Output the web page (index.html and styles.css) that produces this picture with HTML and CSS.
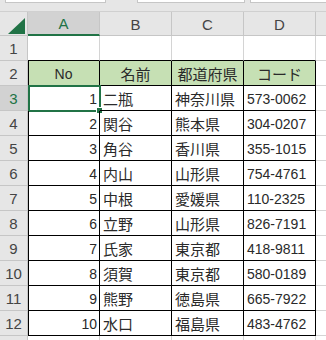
FILE: index.html
```html
<!DOCTYPE html>
<html lang="ja">
<head>
<meta charset="utf-8">
<link rel="stylesheet" href="styles.css">
</head>
<body>
<div class="top">
  <div class="box b1"></div>
  <div class="box b2"></div>
  <div class="box b3"></div>
</div>
<div class="sheet">
  <div class="corner"><svg width="28" height="24" viewBox="0 0 28 24"><polygon points="8,22 25,22 25,6" fill="#217346"/></svg></div>
  <div class="ch sel">A</div><div class="ch">B</div><div class="ch">C</div><div class="ch">D</div><div class="ch e"></div>

  <div class="rh">1</div><div class="c tb"></div><div class="c tb"></div><div class="c tb"></div><div class="c tb"></div><div class="c e"></div>

  <div class="rh">2</div><div class="c t hd a">No</div><div class="c t hd jp">名前</div><div class="c t hd jp">都道府県</div><div class="c t hd jp">コード</div><div class="c e"></div>

  <div class="rh rsel">3</div><div class="c t a num cur">1<span class="selbox"><span class="handle"></span></span></div><div class="c t jp">二瓶</div><div class="c t jp">神奈川県</div><div class="c t">573-0062</div><div class="c e"></div>
  <div class="rh">4</div><div class="c t a num">2</div><div class="c t jp">関谷</div><div class="c t jp">熊本県</div><div class="c t">304-0207</div><div class="c e"></div>
  <div class="rh">5</div><div class="c t a num">3</div><div class="c t jp">角谷</div><div class="c t jp">香川県</div><div class="c t">355-1015</div><div class="c e"></div>
  <div class="rh">6</div><div class="c t a num">4</div><div class="c t jp">内山</div><div class="c t jp">山形県</div><div class="c t">754-4761</div><div class="c e"></div>
  <div class="rh">7</div><div class="c t a num">5</div><div class="c t jp">中根</div><div class="c t jp">愛媛県</div><div class="c t">110-2325</div><div class="c e"></div>
  <div class="rh">8</div><div class="c t a num">6</div><div class="c t jp">立野</div><div class="c t jp">山形県</div><div class="c t">826-7191</div><div class="c e"></div>
  <div class="rh">9</div><div class="c t a num">7</div><div class="c t jp">氏家</div><div class="c t jp">東京都</div><div class="c t">418-9811</div><div class="c e"></div>
  <div class="rh">10</div><div class="c t a num">8</div><div class="c t jp">須賀</div><div class="c t jp">東京都</div><div class="c t">580-0189</div><div class="c e"></div>
  <div class="rh">11</div><div class="c t a num">9</div><div class="c t jp">熊野</div><div class="c t jp">徳島県</div><div class="c t">665-7922</div><div class="c e"></div>
  <div class="rh">12</div><div class="c t a num">10</div><div class="c t jp">水口</div><div class="c t jp">福島県</div><div class="c t">483-4762</div><div class="c e"></div>

  <div class="rh"></div><div class="c"></div><div class="c"></div><div class="c"></div><div class="c"></div><div class="c e"></div>
</div>
</body>
</html>
```
FILE: styles.css
```css
html, body {
  margin: 0;
  padding: 0;
  background: #ffffff;
  overflow: hidden;
}
body {
  width: 326px;
  height: 340px;
  font-family: "Liberation Sans", "Noto Sans CJK JP", sans-serif;
  color: #2a2a2a;
}
.top {
  height: 12px;
  background: #e6e6e6;
  position: relative;
  display: flex;
  box-sizing: border-box;
  border-bottom: 1px solid #d0d0d0;
}
.box {
  height: 3px;
  background: #fff;
  box-sizing: border-box;
  border: 1px solid #c6c6c6;
  border-top: none;
}
.b1 { margin-left: 5px; width: 101px; }
.b2 { margin-left: 31px; width: 108px; }
.b3 { margin-left: 5px; flex: 1; border-right: none; }

.sheet {
  display: grid;
  grid-template-columns: 28px 72px 72px 72px 72px 10px;
  grid-template-rows: 24px repeat(13, 25px);
}
.sheet > div {
  box-sizing: border-box;
}
.corner {
  background: #e6e6e6;
  border-right: 1px solid #c6c6c6;
  border-bottom: 1px solid #c6c6c6;
  line-height: 0;
}
.ch {
  background: #e6e6e6;
  border-right: 1px solid #c6c6c6;
  border-bottom: 1px solid #c6c6c6;
  display: flex;
  align-items: center;
  justify-content: center;
  font-size: 15px;
  color: #444;
  padding-top: 1px;
}
.ch.sel {
  background: #d2d2d2;
  color: #217346;
  border-bottom: 2px solid #217346;
}
.ch.e { border-right: none; }
.rh {
  background: #e6e6e6;
  border-right: 1px solid #c6c6c6;
  border-bottom: 1px solid #c6c6c6;
  display: flex;
  align-items: center;
  justify-content: center;
  font-size: 15px;
  color: #444;
  padding-top: 1px;
}
.rh.rsel {
  background: #d2d2d2;
  color: #217346;
}
.c {
  border-right: 1px solid #d4d4d4;
  border-bottom: 1px solid #d4d4d4;
  display: flex;
  align-items: center;
  padding: 1px 3px 0 3px;
  font-size: 14px;
  white-space: nowrap;
  position: relative;
}
.c.e { border-right: none; }
.c.tb { border-bottom-color: #000; }
.c.t {
  border-right-color: #000;
  border-bottom-color: #000;
}
.c.a { box-shadow: inset 1px 0 0 #000; }
.c.jp { font-size: 15px; }
.c.hd {
  background: #c6e0b4;
  justify-content: center;
}
.c.num {
  justify-content: flex-end;
  padding-right: 2px;
}
.selbox {
  position: absolute;
  left: 0;
  top: -1px;
  width: 73px;
  height: 27px;
  box-sizing: border-box;
  border: 2px solid #217346;
}
.handle {
  position: absolute;
  right: -4px;
  bottom: -4px;
  width: 5px;
  height: 5px;
  background: #217346;
  border: 1px solid #fff;
}
```
